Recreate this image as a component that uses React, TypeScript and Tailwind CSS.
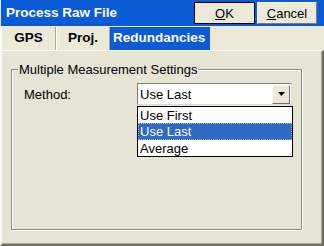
import React from "react";

export default function App() {
  return (
    <div className="w-[324px] h-[246px] bg-[#ece9d8] flex flex-col overflow-hidden font-['Liberation_Sans',Arial,sans-serif] select-none">
      {/* Title bar */}
      <div className="h-[26px] bg-[#0b5bd7] flex items-center pl-[5px] pr-[7px] border-l border-l-[#dfe8f8]">
        <span className="flex-1 text-white font-bold text-[13.5px] leading-none">Process Raw File</span>
        <button className="w-[61px] h-[22px] bg-[#ece9d8] border border-black text-[13px] text-black leading-none flex items-center justify-center">
          <span><span className="underline">O</span>K</span>
        </button>
        <button className="ml-[2px] w-[60px] h-[22px] bg-[#ece9d8] border border-[#f4f3ee] border-r-[#7d7b72] border-b-[#7d7b72] text-[13px] text-black leading-none flex items-center justify-center">
          <span><span className="underline">C</span>ancel</span>
        </button>
      </div>

      {/* Tabs */}
      <div className="h-[24px] flex items-end bg-[#ece9d8]">
        <div className="w-[56px] h-[23px] border-l-2 border-l-white border-r border-r-[#aca899] flex items-center justify-center text-[13.5px] font-bold text-black">
          GPS
        </div>
        <div className="w-[54px] h-[23px] border-l border-l-white border-r border-r-[#aca899] flex items-center justify-center text-[13.5px] font-bold text-black">
          Proj.
        </div>
        <div className="w-[100px] h-[23px] bg-[#0b5bd7] flex items-center pl-[3px] text-[13.5px] font-bold text-white">
          Redundancies
        </div>
        <div className="flex-1 h-full" />
      </div>

      {/* Panel */}
      <div className="flex-1 bg-[#e5e4d5] border-l-2 border-l-[#fbfaf6] border-t border-t-[#fbfaf6] border-r-2 border-r-[#716f64] border-b-2 border-b-[#716f64] shadow-[inset_-1px_-1px_0_#aca899]">
        <div className="relative ml-[9px] mt-[18px] w-[291px] h-[161px] border border-[#8f8e7d] shadow-[1px_1px_0_#ffffff,inset_1px_1px_0_#ffffff]">
          <div className="absolute left-[6px] top-[-8px] bg-[#e5e4d5] px-[1px] text-[13px] leading-[15px] text-black">
            Multiple Measurement Settings
          </div>

          <div className="flex items-center mt-[13px] ml-[12px]">
            <span className="w-[113px] text-[13px] text-black leading-none">Method:</span>
            <div className="relative">
              <div className="w-[155px] h-[22px] bg-white border border-[#7f7f7f] border-r-[#dcdcd0] border-b-[#dcdcd0] flex items-center">
                <span className="flex-1 pl-[2px] text-[13px] text-black leading-none">Use Last</span>
                <div className="w-[18px] h-[19px] mr-[1px] bg-[#ece9d8] border border-[#ffffff] border-r-[#716f64] border-b-[#716f64] flex items-center justify-center">
                  <svg width="7" height="4" viewBox="0 0 7 4">
                    <path d="M0 0H7L3.5 4Z" fill="#000" />
                  </svg>
                </div>
              </div>
              {/* Dropdown list */}
              <div className="absolute left-0 top-[23px] w-[156px] bg-white border border-black flex flex-col z-10">
                <div className="h-[16px] pl-[2px] flex items-center text-[13px] text-black leading-none">Use First</div>
                <div className="h-[17px] pl-[2px] flex items-center text-[13px] text-white leading-none bg-[#316ac5] outline-1 outline-dotted outline-[#9fb8e6] -outline-offset-1">Use Last</div>
                <div className="h-[16px] pl-[2px] flex items-center text-[13px] text-black leading-none">Average</div>
              </div>
            </div>
          </div>
        </div>
      </div>
    </div>
  );
}
